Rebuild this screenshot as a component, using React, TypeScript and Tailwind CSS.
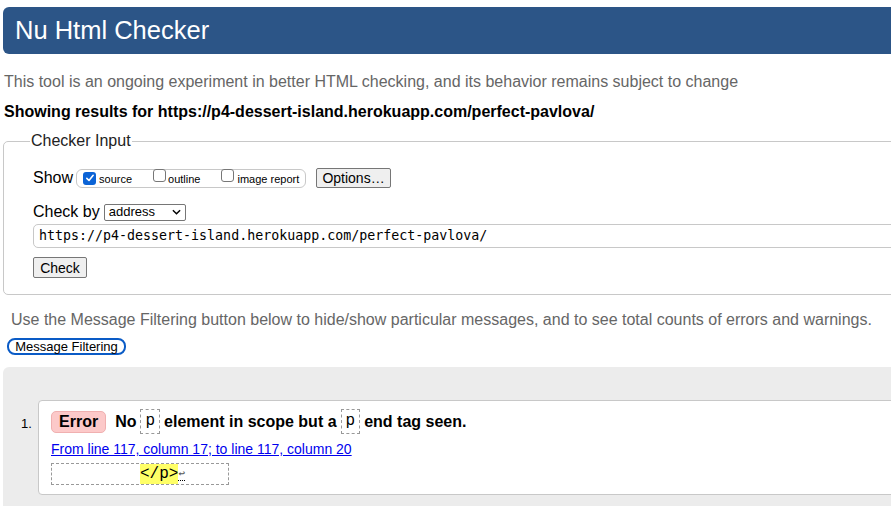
import React from "react";

const SANS = "font-['Liberation_Sans',Arial,sans-serif]";

// dashed inline code chip used in the message text
function Code({ children }: { children: React.ReactNode }) {
  return (
    <code className="mx-[4px] inline-block border border-dashed border-[#999] px-[4px] py-[2px] align-middle font-['Liberation_Mono',monospace] text-[16px] font-normal leading-[19px]">
      {children}
    </code>
  );
}

function Check({ checked }: { checked?: boolean }) {
  return checked ? (
    <span className="inline-flex h-[13px] w-[13px] items-center justify-center rounded-[3px] bg-[#0b63d6]">
      <svg viewBox="0 0 12 12" className="h-[10px] w-[10px]">
        <path d="M2.2 6.4 L4.8 9 L9.8 2.8" fill="none" stroke="white" strokeWidth="1.9" strokeLinecap="round" strokeLinejoin="round" />
      </svg>
    </span>
  ) : (
    <span className="inline-block h-[13px] w-[13px] rounded-[3px] border border-[#777] bg-white" />
  );
}

export default function App() {
  return (
    <div className={`h-[506px] w-[891px] overflow-hidden bg-white text-black ${SANS}`}>
      <div className="w-[930px] pl-[3px]">
        {/* header */}
        <div className="mt-[7px] flex h-[47px] items-center rounded-l-[6px] bg-[#2c5587] pl-[12px]">
          <h1 className="mt-[1px] text-[25.5px] leading-none text-white">Nu Html Checker</h1>
        </div>

        <p className="mt-[19px] pl-[1px] text-[16px] leading-[18px] text-[#666]">
          This tool is an ongoing experiment in better HTML checking, and its behavior remains subject to change
        </p>
        <p className="mt-[12px] pl-[1px] text-[16px] font-bold leading-[18px]">
          Showing results for https://p4-dessert-island.herokuapp.com/perfect-pavlova/
        </p>

        {/* checker input */}
        <fieldset className="mt-[11px] h-[163px] rounded-[5px] border border-[#c8c8c8] pl-[29px] pt-[0px]">
          <legend className="ml-[-3px] px-[1px] text-[16px] leading-[18px] text-[#222]">Checker Input</legend>

          <div className="mt-[16px] flex items-center">
            <span className="text-[16px]">Show</span>
            <div className="ml-[3px] flex h-[19px] w-[230px] items-center rounded-[6px] border border-[#c8c8c8] pl-[6px] text-[11px]">
              <Check checked />
              <span className="ml-[3px] mt-[2px]">source</span>
              <span className="ml-[21px]"><Check /></span>
              <span className="ml-[2px] mt-[2px]">outline</span>
              <span className="ml-[21px]"><Check /></span>
              <span className="ml-[3px] mt-[2px]">image report</span>
            </div>
            <button className="ml-[10px] h-[20px] w-[75px] rounded-[2px] border border-[#767676] bg-[#efefef] text-[14px] leading-none">
              Options…
            </button>
          </div>

          <div className="mt-[10px] flex items-center">
            <span className="text-[16px]">Check by</span>
            <div className="ml-[4px] flex h-[17px] w-[82px] items-center justify-between rounded-[2px] border border-[#767676] pl-[4px] pr-[4px] text-[13px]">
              <span>address</span>
              <svg viewBox="0 0 10 6" className="h-[6px] w-[9px]">
                <path d="M1 1 L5 5 L9 1" fill="none" stroke="black" strokeWidth="1.6" />
              </svg>
            </div>
          </div>

          <div className="mt-[0px] flex h-[24px] items-center rounded-l-[5px] border border-[#c8c8c8] pl-[5px] font-['DejaVu_Sans_Mono',monospace] text-[13.3px]">
            https://p4-dessert-island.herokuapp.com/perfect-pavlova/
          </div>

          <button className="mt-[9px] h-[21px] w-[54px] rounded-[2px] border border-[#767676] bg-[#efefef] text-[14px] leading-none">
            Check
          </button>
        </fieldset>

        <p className="mt-[16px] pl-[8px] text-[16px] leading-[18px] text-[#666]">
          Use the Message Filtering button below to hide/show particular messages, and to see total counts of errors and warnings.
        </p>
        <button className="ml-[4px] mt-[9px] h-[17px] w-[119px] rounded-[8px] border-2 border-[#0a5bc6] text-[13px] leading-none">
          Message Filtering
        </button>

        {/* results */}
        <div className="mt-[9px] h-[160px] rounded-tl-[6px] bg-[#ececec] pl-[18px] pt-[33px]">
          <div className="flex">
            <span className="w-[17px] pt-[14px] text-[13px]">1.</span>
            <div className="h-[95px] flex-1 rounded-[4px] border border-[#c8c8c8] bg-white pl-[12px] pt-[8px]">
              <div className="flex items-center text-[16px] font-bold">
                <span className="rounded-[5px] border border-[#f0b0b0] bg-[#fcc9c9] px-[7px] leading-[20px]">Error</span>
                <span className="ml-[9px]">No</span>
                <Code>p</Code>
                <span>element in scope but a</span>
                <Code>p</Code>
                <span>end tag seen.</span>
              </div>
              <a href="#" className="mt-[7px] block text-[14px] leading-[16px] text-[#0000ee] underline">
                From line 117, column 17; to line 117, column 20
              </a>
              <div className="mt-[6px] flex h-[22px] w-[178px] items-center border border-dashed border-[#999] pl-[88px] font-['Liberation_Mono',monospace] text-[16px]">
                <span className="bg-[#ffff66] leading-[20px]">&lt;/p&gt;</span>
                <span className="border-b border-dotted border-black text-[11px] leading-[12px] text-[#555]">↩</span>
              </div>
            </div>
          </div>
        </div>
      </div>
    </div>
  );
}
